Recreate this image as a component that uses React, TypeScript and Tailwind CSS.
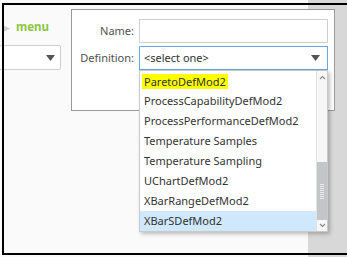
import React from "react";

const options = [
  "ParetoDefMod2",
  "ProcessCapabilityDefMod2",
  "ProcessPerformanceDefMod2",
  "Temperature Samples",
  "Temperature Sampling",
  "UChartDefMod2",
  "XBarRangeDefMod2",
  "XBarSDefMod2",
];

function Caret({ className = "" }: { className?: string }) {
  return (
    <svg width="9" height="6" viewBox="0 0 9 6" className={className}>
      <path d="M0 0 L9 0 L4.5 6 Z" fill="#555" />
    </svg>
  );
}

function Chevron({ up }: { up?: boolean }) {
  return (
    <svg width="7" height="5" viewBox="0 0 7 5">
      <path
        d={up ? "M1 4 L3.5 1.5 L6 4" : "M1 1 L3.5 3.5 L6 1"}
        fill="none"
        stroke="#8a8a8a"
        strokeWidth="1.2"
      />
    </svg>
  );
}

function Scrollbar() {
  return (
    <div className="w-[11px] flex flex-col border-l border-[#e2e2e2] bg-[#f7f7f7]">
      <div className="h-[12px] flex items-center justify-center">
        <Chevron up />
      </div>
      <div className="h-[79px]" />
      <div className="h-[58px] bg-[#c3c6c9] flex items-center justify-center">
        <div className="flex flex-col gap-[1px]">
          {[...Array(8)].map((_, i) => (
            <div key={i} className="w-[4px] h-[1px] bg-[#e9eaeb]" />
          ))}
        </div>
      </div>
      <div className="h-[11px] flex items-center justify-center">
        <Chevron />
      </div>
    </div>
  );
}

export default function App() {
  return (
    <div className="relative w-[347px] h-[257px] overflow-hidden bg-[#fafafa] font-['Noto_Sans',_'Open_Sans',_sans-serif] text-[11px] text-[#333]">
      <div className="flex h-full">
        <div className="w-[308px] pt-[17px]">
          <div className="flex items-center h-[20px] pl-[3px]">
            <span className="text-[#d0d0d0] text-[9px] leading-none">▶</span>
            <span className="ml-[6px] font-bold text-[#8cc63f] text-[11.5px] leading-none">menu</span>
          </div>
          <div className="mt-[8px] -ml-[1px] w-[62px] h-[25px] bg-white border border-[#cfcfcf] rounded-[2px] flex items-center justify-end pr-[5px]">
            <Caret />
          </div>
        </div>
        <div className="flex-1 bg-[#d8d8d8]" />
      </div>

      {/* screenshot frame */}
      <div className="absolute left-[2px] top-[3px] w-[347px] h-[252px] border-2 border-r-0 border-black" />

      {/* dialog window */}
      <div className="absolute left-[71px] top-[9px] w-[264px] h-[102px] bg-white border border-[#9a9a9a]">
        <div className="grid grid-cols-[62px_189px] gap-x-[5px] gap-y-[3px] pt-[9px]">
          <div className="self-center text-right text-[#505050]">Name:</div>
          <div className="h-[24px] border border-[#cfcfcf] bg-white" />
          <div className="self-center text-right text-[#505050]">Definition:</div>
          <div className="relative">
            <div className="h-[24px] border border-[#63a8e0] bg-white flex items-center justify-between pl-[4px] pr-[7px]">
              <span>&lt;select one&gt;</span>
              <Caret />
            </div>
            <div className="absolute left-0 top-full w-full bg-white border border-[#c9c9c9] shadow-[2px_2px_4px_rgba(0,0,0,0.25)] flex">
              <div className="flex-1">
                {options.map((opt, i) => (
                  <div
                    key={opt}
                    className={`h-[20px] flex items-center pl-[4px] ${i === options.length - 1 ? "bg-[#cfe8fc]" : ""}`}
                  >
                    {i === 0 ? (
                      <span className="bg-[#ffff00] -ml-[2px] px-[2px] leading-[15px]">{opt}</span>
                    ) : (
                      <span>{opt}</span>
                    )}
                  </div>
                ))}
              </div>
              <Scrollbar />
            </div>
          </div>
        </div>
      </div>
    </div>
  );
}
